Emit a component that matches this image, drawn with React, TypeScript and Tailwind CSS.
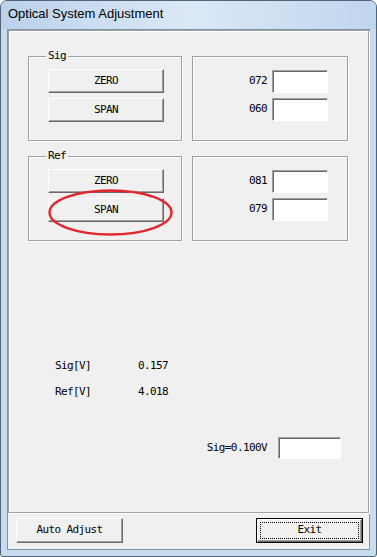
import React from "react";

const mono = "font-['DejaVu_Sans_Mono','Liberation_Mono',monospace] text-[11px] tracking-[-0.6px] text-black";

const Btn = ({ label, className = "" }: { label: string; className?: string }) => (
  <div
    className={`flex items-center justify-center bg-[#f0f0f0] border border-t-white border-l-white border-r-[#696969] border-b-[#696969] shadow-[inset_-1px_-1px_0_#a0a0a0] ${mono} ${className}`}
  >
    {label}
  </div>
);

const Field = ({ className = "" }: { className?: string }) => (
  <div
    className={`bg-white border border-t-[#a0a0a0] border-l-[#a0a0a0] border-r-white border-b-white shadow-[inset_1px_1px_0_#696969] ${className}`}
  />
);

const etched = "border border-[#a0a0a0] shadow-[inset_1px_1px_0_#fff,1px_1px_0_#fff]";

const Group = ({ title, children }: { title: string; children?: React.ReactNode }) => (
  <div className={`relative w-[154px] h-[85px] ${etched} flex flex-col gap-[5px] pt-[12px] pl-[19px]`}>
    <span className={`absolute -top-[8px] left-[17px] px-[2px] bg-[#f0f0f0] leading-[14px] ${mono}`}>
      {title}
    </span>
    <Btn label="ZERO" className="w-[116px] h-[24px]" />
    <Btn label="SPAN" className="w-[116px] h-[24px]" />
    {children}
  </div>
);

const Values = ({ a, b }: { a: string; b: string }) => (
  <div className={`w-[156px] h-[85px] ${etched} flex flex-col items-end gap-[5px] pt-[13px] pr-[19px]`}>
    {[a, b].map((v) => (
      <div key={v} className="flex items-center gap-[5px]">
        <span className={mono}>{v}</span>
        <Field className="w-[56px] h-[23px]" />
      </div>
    ))}
  </div>
);

export default function App() {
  return (
    <div className="w-[377px] h-[557px] bg-white">
      <div className="h-full flex flex-col rounded-t-[7px] rounded-b-[3px] border border-[#52647a] bg-[#c8dbef] px-[6px] pb-[6px] overflow-hidden">
        {/* title bar */}
        <div className="-mx-[6px] h-[28px] pl-[7px] pt-[5px] bg-linear-to-r from-[#bad2eb] via-[#dbe8f6] to-[#c0d6ee] font-['Liberation_Sans',Arial,sans-serif] text-[13px] leading-[16px] text-black">
          Optical System Adjustment
        </div>

        {/* client area */}
        <div className="flex-1 flex flex-col border border-[#7f93aa] bg-[#f0f0f0]">
          <div className={`relative flex-1 flex flex-col ${etched} pl-[19px] pt-[25px]`}>
            <div className="flex gap-[10px]">
              <Group title="Sig" />
              <Values a="072" b="060" />
            </div>
            <div className="flex gap-[10px] mt-[15px]">
              <Group title="Ref">
                <svg
                  className="absolute left-[19px] top-[32px] overflow-visible"
                  width="125"
                  height="47"
                  viewBox="0 0 125 47"
                >
                  <ellipse cx="62.5" cy="23.5" rx="61" ry="22" fill="none" stroke="#e3262d" strokeWidth="2.4" />
                </svg>
              </Group>
              <Values a="081" b="079" />
            </div>

            <div className="mt-[118px] pl-[27px] flex flex-col gap-[12px]">
              <div className="flex leading-[14px]">
                <span className={`w-[83px] ${mono}`}>Sig[V]</span>
                <span className={mono}>0.157</span>
              </div>
              <div className="flex leading-[14px]">
                <span className={`w-[83px] ${mono}`}>Ref[V]</span>
                <span className={mono}>4.018</span>
              </div>
            </div>

            <div className="mt-[38px] pr-[27px] flex justify-end items-center gap-[11px]">
              <span className={mono}>Sig=0.100V</span>
              <Field className="w-[63px] h-[22px]" />
            </div>
          </div>

          {/* bottom buttons */}
          <div className="flex justify-between pl-[8px] pr-[6px] pt-[5px] pb-[6px]">
            <Btn label="Auto Adjust" className="w-[107px] h-[25px]" />
            <div className="w-[107px] h-[25px] border border-black">
              <div className="relative h-full flex items-center justify-center bg-[#f0f0f0] border border-t-white border-l-white border-r-[#696969] border-b-[#696969] shadow-[inset_-1px_-1px_0_#a0a0a0]">
                <div className="absolute inset-[2px] border border-dotted border-black" />
                <span className={mono}>Exit</span>
              </div>
            </div>
          </div>
        </div>
      </div>
    </div>
  );
}
